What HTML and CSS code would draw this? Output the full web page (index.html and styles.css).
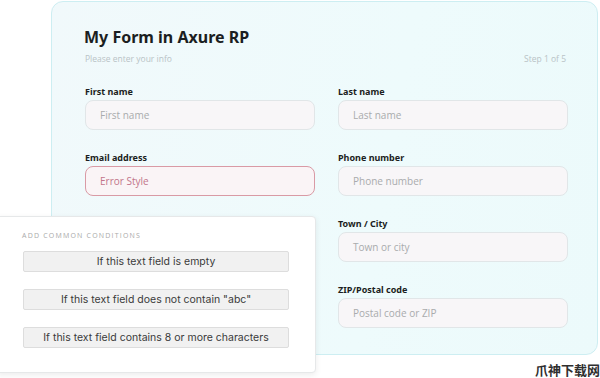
FILE: index.html
```html
<!DOCTYPE html>
<html lang="en">
<head>
    <meta charset="UTF-8">
    <title>My Form in Axure RP</title>
    <link rel="stylesheet" href="styles.css">
</head>
<body>
    <div class="stage">
        <!-- Form card -->
        <section class="form-card">
            <h1 class="form-title">My Form in Axure RP</h1>
            <div class="form-sub">
                <span>Please enter your info</span>
                <span>Step 1 of 5</span>
            </div>

            <div class="form-grid">
                <div class="field">
                    <label>First name</label>
                    <div class="input">First name</div>
                </div>
                <div class="field">
                    <label>Last name</label>
                    <div class="input">Last name</div>
                </div>
                <div class="field">
                    <label>Email address</label>
                    <div class="input input-error">Error Style</div>
                </div>
                <div class="field">
                    <label>Phone number</label>
                    <div class="input">Phone number</div>
                </div>
                <div class="field"></div>
                <div class="field">
                    <label>Town / City</label>
                    <div class="input">Town or city</div>
                </div>
                <div class="field"></div>
                <div class="field">
                    <label>ZIP/Postal code</label>
                    <div class="input">Postal code or ZIP</div>
                </div>
            </div>
        </section>

        <!-- Conditions popup -->
        <aside class="conditions">
            <div class="conditions-title">ADD COMMON CONDITIONS</div>
            <button class="cond-btn">If this text field is empty</button>
            <button class="cond-btn">If this text field does not contain "abc"</button>
            <button class="cond-btn">If this text field contains 8 or more characters</button>
        </aside>

        <div class="watermark">爪神下载网</div>
    </div>
</body>
</html>
```

FILE: styles.css
```css
* {
    margin: 0;
    padding: 0;
    box-sizing: border-box;
}
body {
    background: #ffffff;
    font-family: 'Open Sans', 'Noto Sans', sans-serif;
    width: 600px;
    height: 378px;
    overflow: hidden;
}
.stage {
    position: relative;
    width: 600px;
    height: 378px;
    padding-top: 1px;
}
/* Form card */
.form-card {
    margin-left: 51px;
    width: 547px;
    height: 354px;
    padding: 24px 31px 0 32px;
    background: linear-gradient(100deg, #f1f9fb 0%, #eefbfc 60%, #ecfafb 100%);
    border: 1px solid #cdeef2;
    border-radius: 12px;
}
.form-title {
    font-family: 'Noto Sans', sans-serif;
    font-size: 16px;
    line-height: 22px;
    font-weight: 700;
    color: #1b1e21;
}
.form-sub {
    display: flex;
    justify-content: space-between;
    margin-top: 5px;
    padding-left: 1px;
    font-size: 8.5px;
    line-height: 12px;
    color: #b9c3c6;
}
.form-grid {
    display: grid;
    grid-template-columns: 230px 230px;
    column-gap: 23px;
    row-gap: 22px;
    margin-top: 21px;
    padding-left: 1px;
}
.field {
    min-height: 44px;
}
.field label {
    display: block;
    font-family: 'Noto Sans', sans-serif;
    font-size: 9px;
    line-height: 12px;
    font-weight: 700;
    color: #1b1e21;
}
.input {
    margin-top: 2px;
    height: 30px;
    padding-left: 14px;
    display: flex;
    align-items: center;
    background: #f8f6f8;
    border: 1px solid #e1e6e8;
    border-radius: 8px;
    font-size: 10px;
    color: #a9abad;
}
.input-error {
    border-color: #d99aa5;
    background: #faf4f6;
    color: #c2748a;
}
/* Conditions popup */
.conditions {
    position: absolute;
    left: -4px;
    top: 216px;
    width: 320px;
    height: 157px;
    padding: 13px 0 0 26px;
    background: #ffffff;
    border: 1px solid #e6e8e9;
    border-radius: 4px;
    box-shadow: 0 2px 6px rgba(0, 0, 0, 0.08);
}
.conditions-title {
    font-family: 'Open Sans', sans-serif;
    font-size: 7px;
    line-height: 12px;
    letter-spacing: 1.2px;
    color: #a9a9a9;
    margin-left: -1px;
    margin-bottom: 9px;
}
.cond-btn {
    display: block;
    width: 266px;
    height: 21px;
    margin-bottom: 17px;
    background: #f1f1f1;
    border: 1px solid #dddddd;
    border-radius: 2px;
    font-family: 'Inter', 'Liberation Sans', sans-serif;
    font-size: 10.5px;
    color: #3a3a3a;
}
.watermark {
    position: absolute;
    right: 0;
    bottom: 0;
    font-family: 'Noto Sans CJK SC', sans-serif;
    font-size: 13px;
    line-height: 16px;
    font-weight: 700;
    color: #2f2f2f;
}
```
